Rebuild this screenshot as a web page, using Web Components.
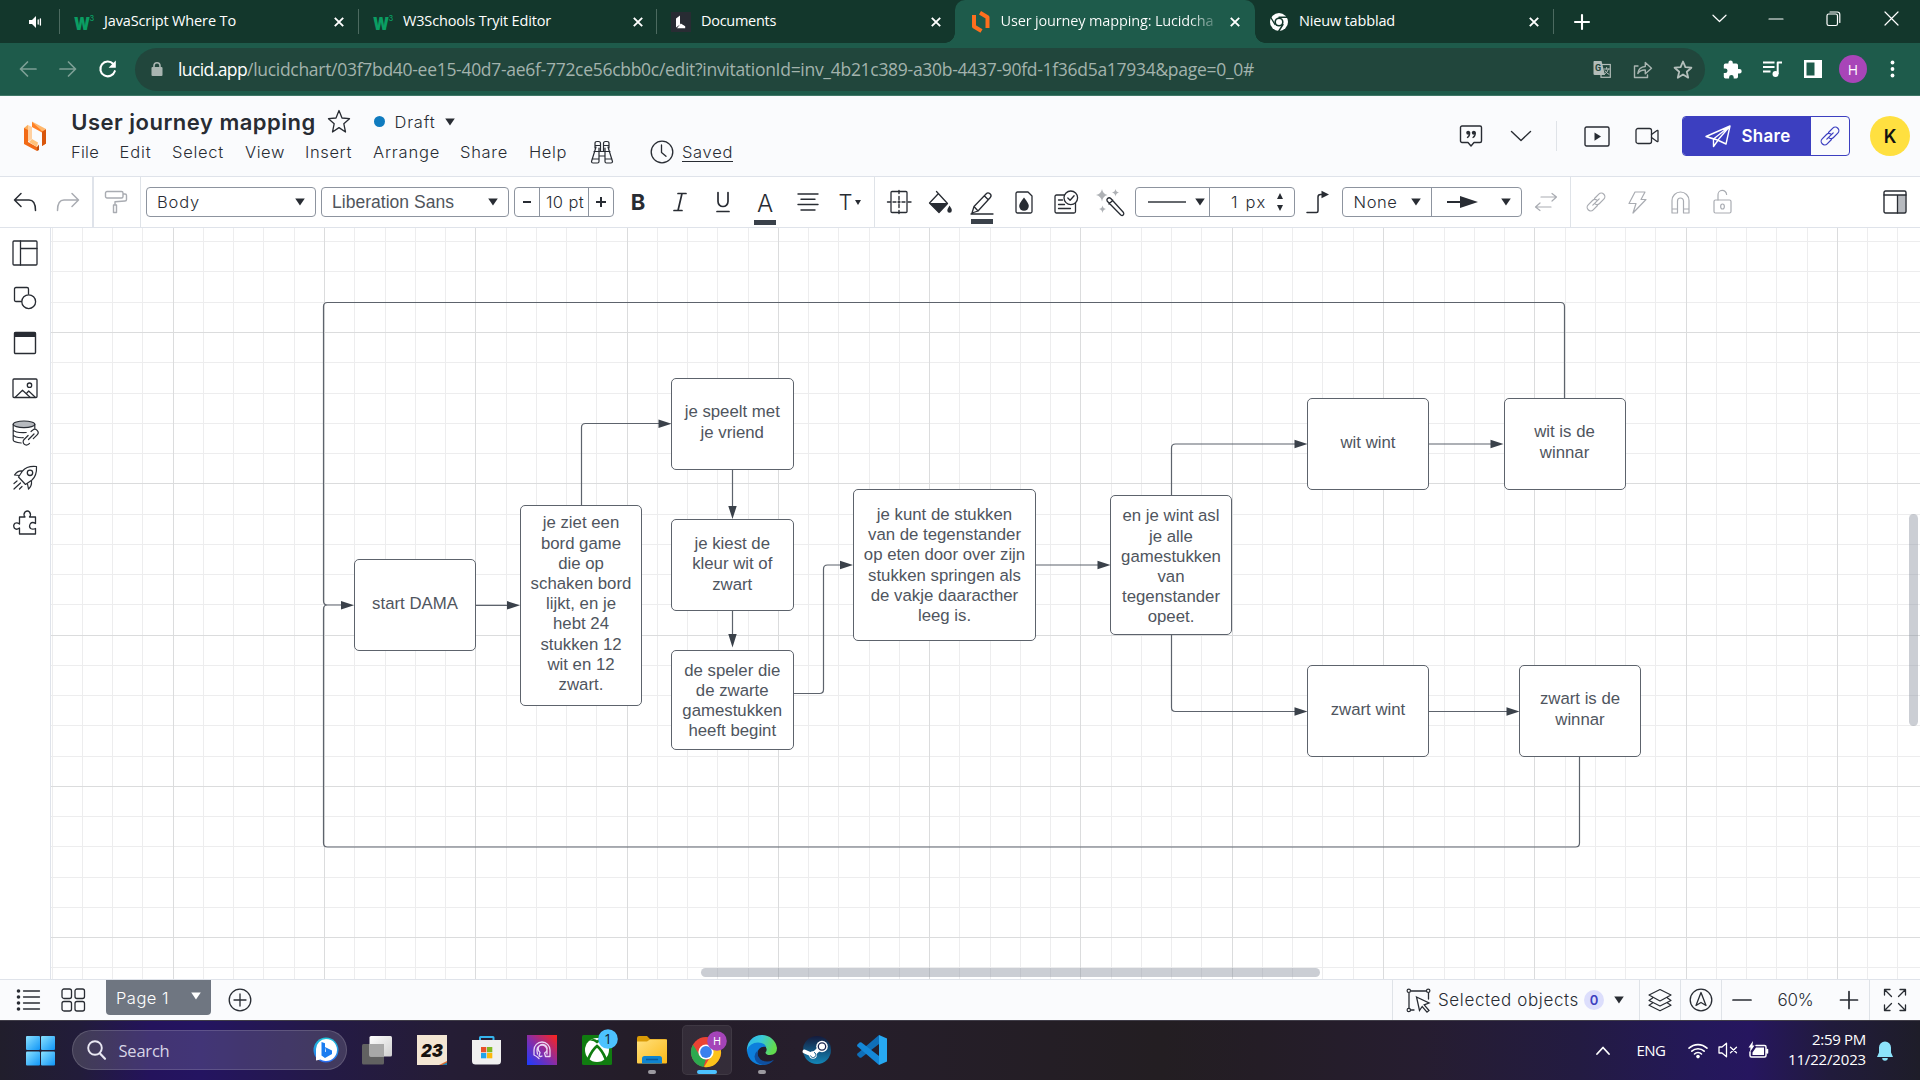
<!DOCTYPE html>
<html lang="nl">
<head>
<meta charset="utf-8">
<title>User journey mapping: Lucidchart</title>
<style>
html,body{margin:0;height:100%;overflow:hidden;background:#fff}
body{font-family:Inter,"Liberation Sans",sans-serif;color:#282c33}
</style>
</head>
<body>
<lucid-window></lucid-window>
<script>
/* ---------- icons: [width, height, svg body] ---------- */
const S = (d, w = 1.4, c = 'currentColor', extra = '') => `<path d="${d}" fill="none" stroke="${c}" stroke-width="${w}" stroke-linejoin="round" stroke-linecap="round" ${extra}/>`;
const F = (d, c = 'currentColor') => `<path d="${d}" fill="${c}"/>`;
const BUTT = 'style="stroke-linecap:butt"';
const LINK = 'M9.5 7.5l4.3-4.300a3.500 3.500 0 0 1 5 5l-4.300 4.300a3.500 3.500 0 0 1-4.300.5M12.500 14.500l-4.300 4.300a3.500 3.500 0 0 1-5-5l4.300-4.300a3.500 3.500 0 0 1 4.300-.5M7.800 14.200l6.400-6.400';
const ICONS = {
  speaker: [14, 14, F('M1 5v4h3l4 4V1L4 5z') + S('M10.2 5v4M12.4 4v6', 1.3)],
  w3: [22, 20, '<text x="0" y="17.500" font-family="Inter" font-weight="900" font-size="17" textLength="16" lengthAdjust="spacingAndGlyphs" fill="#0a9e63">W</text><text x="15.500" y="8.500" font-family="Inter" font-weight="500" font-size="7.500" fill="#0a9e63">3</text>'],
  x: [12, 12, S('M1.8 1.8l8.4 8.4M10.2 1.8L1.8 10.2', 1.9, 'currentColor', BUTT)],
  docL: [20, 20, '<rect width="20" height="20" fill="#282c33"/>' + F('M5 6.500L9 3.500v9l-4 3zM9.800 11.500l4.400 2.800v2H6z', '#fff')],
  lucid: [20, 24, S('M3 5v11.500l7.500 4.500', 4, '#ff6f1e', BUTT) + S('M9 2.800l7.500 4.400V18', 4, '#ff6f1e', BUTT)],
  lucidBig: [26, 34, F('M2 9l4-3.200V20l-4 3z', '#fcae5c') + F('M6 6l4 2v12L6 22.400z', '#ffd0a0') + F('M2 9l4 2v12l9 5v4L2 25z', '#f26a16') + F('M15 28l-8-5 3-3 6 3.500z', '#ffc27b') + F('M15 28v4l2-1v-5.500z', '#c2500e') + F('M10 2.500l14 7.500-4 2.200L10 6z', '#ffb76b') + F('M10 3v5l10 5.500V27l4-2.500V10.300L20 12z', '#ff8026') + F('M20 13v14l4-2.500V10.300z', '#d8560d')],
  chrome: [20, 20, '<circle cx="10" cy="10" r="9" fill="#fff"/><circle cx="10" cy="10" r="4.600" fill="#13372c"/><circle cx="10" cy="10" r="3" fill="#fff"/>' + S('M10 5.300h8.500M6 12.500L1.800 5.500M14 12.500L9.500 19.500', 1.4, '#13372c')],
  plusW: [16, 16, S('M8 1v14M1 8h14', 2.1)],
  chevS: [15, 9, S('M1 1.200l6.500 6.300L14 1.200', 1.2)],
  min: [14, 2, S('M0 1h14', 1.2)],
  restore: [15, 16, '<rect x="1" y="3" width="10.500" height="11.500" rx="1.800" fill="none" stroke="currentColor" stroke-width="1.200"/>' + S('M4 1h7.200q2.600 0 2.600 2.600V11.500', 1.2)],
  close: [15, 15, S('M1 1l13 13M14 1L1 14', 1.2)],
  back: [18, 16, S('M17 8H1.500M8.500 1L1.500 8l7 7', 1.7)],
  fwd: [18, 16, S('M1 8h15.500M9.500 1l7 7-7 7', 1.7)],
  reload: [20, 20, S('M16.800 12.200A7.400 7.400 0 1 1 15.300 5', 2.1) + F('M17.800 1.500v7.200h-7.200z')],
  lock: [12, 14, '<rect x="0.500" y="5" width="11" height="9" rx="1" fill="currentColor"/>' + S('M3 5.500V3.800a3 3 0 0 1 6 0V5.500', 1.6)],
  translate: [18, 19, '<path d="M1 1h7.500l3.500 14H1.800A1.300 1.300 0 0 1 .5 13.700V1.800z" fill="#b3bdb9"/><rect x="8" y="4.500" width="9.300" height="12.800" fill="none" stroke="#b3bdb9" stroke-width="1.200"/><text x="2" y="11" font-family="Roboto" font-weight="700" font-size="9" fill="#22463c">G</text>' + S('M11 9h5.500M13.600 7.500V9M15.500 9q-.8 3.500-4 5.200M12 10.800q1.500 2.500 4 3.600', 1, '#b3bdb9')],
  share: [20, 19, S('M5 6H1.500v11.500h13V15', 1.4) + S('M4.800 13.500q.8-6.500 7.500-7V2.500l6.200 5.700-6.200 5.600V10q-5-.3-7.500 3.500z', 1.4)],
  star: [20, 19, S('M10 1.500l2.400 5.700 6 .5-4.600 4 1.400 6L10 14.500l-5.200 3.200 1.400-6-4.600-4 6-.5z', 1.8)],
  bigstar: [24, 25, S('M12 1.500l3 7.500 7.500.7-5.700 5 1.700 8.300-6.500-4.400-6.500 4.400 1.700-8.300-5.700-5 7.500-.7z', 1.3)],
  puzzle: [19, 19, F('M16.500 9H15V5.200A1.700 1.700 0 0 0 13.300 3.500H9.800V2.800a2.200 2.200 0 0 0-4.400 0v.7H2.500A1.700 1.700 0 0 0 .8 5.200v3.300h1.400a2.300 2.300 0 0 1 0 4.600H.8v3.700a1.700 1.700 0 0 0 1.700 1.700h3.600v-1.300a2.300 2.300 0 0 1 4.600 0v1.300h2.600a1.700 1.700 0 0 0 1.700-1.700V13.400h1.500a2.200 2.200 0 0 0 0-4.400z')],
  queue: [21, 17, S('M1 1.500h11.500M1 6h11.500M1 10.500h7.500', 2, 'currentColor', BUTT) + S('M15.700 13V1.500H20', 2, 'currentColor', BUTT) + '<circle cx="13.500" cy="13" r="3" fill="currentColor"/>'],
  panelW: [18, 18, F('M0 0h18v18H0zM2.500 2.500v13h8v-13z').replace('/>', ' fill-rule="evenodd"/>')],
  dots: [5, 18, '<circle cx="2.500" cy="2.500" r="1.900" fill="currentColor"/><circle cx="2.500" cy="9" r="1.900" fill="currentColor"/><circle cx="2.500" cy="15.500" r="1.900" fill="currentColor"/>'],
  tri: [10, 8, F('M.2 .5h9.600L5 7.500z')],
  triS: [6, 5, F('M0 0h6L3 5z')],
  binoc: [24, 24, S('M6 7L1.500 21.500q0 1.500 1.500 1.500h4.500q1.500 0 1.500-1.500V8M18 7l4.500 14.500q0 1.500-1.500 1.500h-4.500q-1.500 0-1.500-1.500V8M4 11.500h16M9 16h6M2 19h7M15 19h7M5 8V3.500q0-2 2-2h1.500q2 0 2 2V11M19 8V3.500q0-2-2-2h-1.500q-2 0-2 2V11M5 5.500h5.500M13.500 5.500H19', 1.2)],
  clock: [24, 24, '<circle cx="12" cy="12" r="10.800" fill="none" stroke="currentColor" stroke-width="1.300"/>' + S('M11.500 5v7.500l4.500 3.800', 1.3)],
  chat: [24, 22, S('M3 1h18a1.500 1.500 0 0 1 1.500 1.500v13.500a1.500 1.500 0 0 1-1.500 1.500h-6L12 21l-3-3.500H3a1.500 1.500 0 0 1-1.500-1.500V2.500A1.500 1.500 0 0 1 3 1z', 1.4) + '<circle cx="9.200" cy="7.800" r="2" fill="currentColor"/><circle cx="14.800" cy="7.800" r="2" fill="currentColor"/>' + S('M10.600 8q.2 3-2.200 4.500M16.200 8q.2 3-2.200 4.500', 1.3)],
  chevB: [22, 12, S('M1.500 1.500l9.500 9 9.500-9', 1.4)],
  play: [26, 21, '<rect x="1" y="1" width="24" height="19" rx="1.500" fill="none" stroke="currentColor" stroke-width="1.400"/>' + F('M10.500 6.500l6.500 4-6.500 4.300z')],
  video: [24, 18, '<rect x="1" y="1.500" width="15.500" height="15" rx="2" fill="none" stroke="currentColor" stroke-width="1.300"/>' + S('M16.500 7.500L22 3.500q1-.5 1 .5v10q0 1-1 .5l-5.500-4', 1.3)],
  plane: [26, 23, S('M1 11.500L25 1l-4 18-8.500-4zM25 1L8.500 14v7.500l4-5.500M8.500 14L1 11.500M25 1L12.500 15.500', 1.4)],
  link: [22, 22, S(LINK, 1.2)],
  undo: [24, 20, S('M8 1.500L1.500 8 8 14.500M1.500 8H16q6.500 0 6.500 10.500', 1.5)],
  redo: [24, 20, S('M16 1.500L22.500 8 16 14.500M22.500 8H8Q1.500 8 1.500 18.500', 1.5)],
  roller: [24, 24, S('M3 1.500h14.500a1.500 1.500 0 0 1 1.500 1.500v3.500a1.500 1.500 0 0 1-1.500 1.500H3a1.500 1.500 0 0 1-1.500-1.500V3A1.500 1.500 0 0 1 3 1.500zM19 4h2q1.500 0 1.500 1.500v4q0 1.500-1.500 1.500l-10 .8v3M9.500 15h3v7.500h-3z', 1.4)],
  italic: [14, 20, S('M5 1.500h8M1 18.500h8M9 1.500L5 18.500', 1.7)],
  under: [16, 22, S('M3 1.500v9a5 5 0 0 0 10 0v-9M2 20.500h12', 1.7)],
  align: [20, 18, S('M0 1h20M3 6.200h14M0 11.500h20M3 17h14', 1.4)],
  crop: [24, 24, S('M4 4.500v-2q0-1 1-1h14q1 0 1 1v19q0 1-1 1H5q-1 0-1-1z', 1.3) + S('M12 .5v3M12 6.500v3M12 20.500v3M12 14.500v3M.5 12h3M6 12h3M21 12h3M15 12h3M11 12h2M12 11v2', 1.4)],
  bucket: [24, 24, S('M8.500 1.500l11 12-8.500 9L1.500 13l8.500-9', 1.3) + F('M1.500 13h18l-8.500 9.500zM21.500 15.500q2.500 3.500 2.300 5a2.200 2.200 0 0 1-4.500 0q0-1.500 2.200-5z')],
  pencil: [24, 24, S('M2 22l2-6.500L16.500 2.500q1.500-1.500 3.500.300t.300 3.700L8 20zM14.500 5l3.800 3.800M4 15.500L8 20M1 23h22', 1.3)],
  drop: [18, 23, S('M2.500 1H13l4 4v15.500a1.500 1.500 0 0 1-1.500 1.500h-13A1.500 1.500 0 0 1 1 20.500v-18A1.500 1.500 0 0 1 2.500 1z', 1.3) + F('M9 6.500q4.800 6 4.800 8.500a4.800 4.800 0 0 1-9.600 0q0-2.500 4.800-8.500z')],
  note: [25, 24, '<rect x="1" y="5" width="20.500" height="18" rx="1.500" fill="none" stroke="currentColor" stroke-width="1.300"/><circle cx="16.800" cy="7.800" r="6.800" fill="#fff" stroke="currentColor" stroke-width="1.300"/>' + S('M13.800 8l2.300 2.300 4-4.500M4.500 10h4M4.500 14.500h6M4.500 18.500h12', 1.3)],
  wand: [29, 27, F('M6 0q.8 5 5.500 6Q6.800 7 6 12.500 5.200 7 0 6q5.200-1 6-6zM19.500 0q.5 3 3.500 3.500-3 .5-3.500 4-.5-3.500-3.500-4 3-.5 3.500-3.500zM6.500 16.500q.5 3 3.500 3.500-3 .5-3.500 4-.5-3.500-3.500-4 3-.5 3.500-3.500z', '#aeb1b5') + S('M11.500 9.500q1.700-1.500 3.300 0L27.500 23.500q.8 1.500-.3 2.500-1 1-2.400 0L11.300 12.300q-1-1.500.200-2.800zM13 15l3.800-3.700', 1.3)],
  elbow: [24, 24, S('M1 22.500h9.500q1.500 0 1.500-1.500V7q0-2.500 2.500-2.500H17', 1.5) + F('M15.500 .8l7.500 3.700-7.500 3.700z')],
  swap: [24, 20, S('M7 5h15M18 1.500l4.500 3.500-4.500 4M17 15H2M6 11l-4.500 4 4.500 3.500', 1.2)],
  bolt: [19, 23, S('M7 1h10l-4 7.500h5L5 22l3-9.500H1z', 1.2)],
  magnet: [19, 23, S('M1 22V9.500a8.500 8.500 0 0 1 17 0V22h-5.500V10a3 3 0 0 0-6 0v12zM1 18h5.500M12.500 18H18', 1.2)],
  unlock: [19, 24, '<rect x="1" y="10" width="17" height="13" rx="1.500" fill="none" stroke="currentColor" stroke-width="1.200"/>' + S('M5 10V5a4.300 4.300 0 0 1 8.600-.5M9.500 14a1.700 2.300 0 0 1 0 5 1.700 2.300 0 0 1 0-5z', 1.2)],
  panel: [24, 24, '<rect x="14.500" y="5" width="8" height="17.500" fill="#b7babf"/><rect x="1" y="1" width="22" height="22" rx="1.500" fill="none" stroke="currentColor" stroke-width="1.400"/>' + S('M1 5h22M14.500 5v18', 1.3)],
  layout: [26, 26, '<rect x="1" y="1" width="24" height="24" rx="1" fill="none" stroke="currentColor" stroke-width="1.300"/>' + S('M8.500 1v24M8.500 8.500H25', 1.3)],
  shapes: [24, 24, S('M8.500 15.500H3q-1.500 0-1.500-1.500V3q0-1.500 1.500-1.500h11q1.500 0 1.500 1.500v5', 1.3) + '<circle cx="15.700" cy="15.700" r="6.900" fill="none" stroke="currentColor" stroke-width="1.300"/>'],
  frame: [24, 24, '<rect x="1.500" y="1.500" width="21" height="21" rx="1" fill="none" stroke="currentColor" stroke-width="1.400"/>' + F('M1.500 1h21v5h-21z')],
  image: [26, 20, '<rect x="1" y="1" width="24" height="18.500" rx="1" fill="none" stroke="currentColor" stroke-width="1.300"/><circle cx="17.500" cy="7.200" r="2.200" fill="none" stroke="currentColor" stroke-width="1.300"/>' + S('M3.500 19l7-6.800 7.300 6.800M14.500 15.500l2.200-2.500 6.300 6', 1.2)],
  db: [27, 26, '<ellipse cx="12" cy="4.300" rx="10.800" ry="3.300" fill="#b7babf" stroke="currentColor" stroke-width="1.200"/>' + S('M1.200 4.300V20q0 2 8 3M22.800 4.300V8M1.200 10q2 3 13 2.500M1.200 15q2 3 10 2.700M19 11.500l1.500-1.200a3.200 3.200 0 0 1 4.600 4.600l-3.800 3.800M17.500 23.300l-.8.8a3.200 3.200 0 0 1-4.600-4.600l4-4M16.500 19.500l5.500-5.500', 1.2)],
  rocket: [25, 25, S('M23.500 1.500Q14 .5 9.500 6L5.500 12l7 7.500 6.500-4.500q5-4.500 4.500-13.500zM9.500 6q-5-.5-8 4l5 .5M18.500 16q.5 5-3 8l-1-5M1 18.500l3-2.500M1 24l6.500-6M6.500 24L9 21.500', 1.2) + '<circle cx="17" cy="7.800" r="2.700" fill="none" stroke="currentColor" stroke-width="1.300"/>'],
  jigsaw: [24, 25, S('M6.500 7H12q-2-2.300 0-5 2.500-2 4.500 0 2 2.700 0 5h6v6.500q-3-2-5 0-2 3.200.2 5 2 1.200 4.800 0V24h-16v-6q-3 2.300-5 .3-1.800-3 .5-5 2-1.300 4.500.7z', 1.3)],
  list: [24, 24, '<g fill="currentColor"><circle cx="2.500" cy="3" r="1.800"/><circle cx="2.500" cy="9" r="1.800"/><circle cx="2.500" cy="15" r="1.800"/><circle cx="2.500" cy="21" r="1.800"/></g>' + S('M7.500 3h16M7.500 9h16M7.500 15h16M7.500 21h16', 1.3)],
  grid4: [25, 24, '<g fill="none" stroke="currentColor" stroke-width="1.300"><rect x="1" y="1" width="9.500" height="9.500" rx="2"/><rect x="14" y="1" width="9.500" height="9.500" rx="2"/><rect x="1" y="13.500" width="9.500" height="9.500" rx="2"/><rect x="14" y="13.500" width="9.500" height="9.500" rx="2"/></g>'],
  addc: [24, 24, '<circle cx="12" cy="12" r="10.800" fill="none" stroke="currentColor" stroke-width="1.300"/>' + S('M12 6v12M6 12h12', 1.3)],
  select: [25, 25, S('M3 5v15M5 3h15.500M22.500 5v6M3 22h5', 1.3) + '<g fill="#fff" stroke="currentColor" stroke-width="1.200"><circle cx="2.800" cy="2.800" r="1.700"/><circle cx="22.200" cy="2.800" r="1.700"/><circle cx="2.800" cy="22" r="1.700"/></g><path d="M10.500 9l12.500 6-4.800 1.800 4.800 5.700-2 1.700-4.800-5.700-2.700 4z" fill="#fff" stroke="currentColor" stroke-width="1.300"/>'],
  layers: [24, 24, S('M12 1.500l11 5.500-11 6-11-6zM4.500 10L1 12.500l11 5.500 11-5.500L19.500 10M4.500 15L1 17.300l11 5.500 11-5.500-3.500-2.300', 1.2)],
  compass: [24, 24, '<circle cx="12" cy="12" r="10.800" fill="none" stroke="currentColor" stroke-width="1.300"/>' + S('M12 4.500l5 13-5-3-5 3z', 1.3)],
  minus: [18, 2, S('M0 1h18', 1.7)],
  dash: [8, 2, S('M0 1h8', 2, 'currentColor', BUTT)],
  plusS: [10, 10, S('M5 0v10M0 5h10', 2, 'currentColor', BUTT)],
  spin: [8, 18, F('M1 6l3-6 3 6zM1 12h6l-3 6z')],
  plus: [18, 18, S('M9 .5v17M.5 9h17', 1.7)],
  expand: [24, 24, S('M1.500 7V1.500H7M1.500 1.500l7 7M17 1.500h5.500V7M22.500 1.500l-7 7M1.500 17v5.500H7M1.500 22.500l7-7M17 22.500h5.500V17M22.500 22.500l-7-7', 1.3)],
  win: [30, 30, '<defs><linearGradient id="wg" x2="1" y2="1"><stop stop-color="#8be1ff"/><stop offset="1" stop-color="#0f95f7"/></linearGradient></defs><g fill="url(#wg)"><rect width="14" height="14" rx="1"/><rect x="15" width="14" height="14" rx="1"/><rect y="15.500" width="14" height="14" rx="1"/><rect x="15" y="15.500" width="14" height="14" rx="1"/></g>'],
  mag: [19, 20, '<circle cx="8" cy="8" r="6.800" fill="none" stroke="#e9e7f2" stroke-width="1.900"/>' + S('M13 13.500l5 5.300', 2.2, '#e9e7f2')],
  bing: [26, 26, '<defs><linearGradient id="bg" x2="0" y2="1"><stop stop-color="#1fc5d8"/><stop offset="1" stop-color="#2a6af0"/></linearGradient></defs><circle cx="13" cy="13" r="12.500" fill="url(#bg)"/><path d="M13 2a11 11 0 1 1-5.500 20.500L3 23.500V12A10.500 10.500 0 0 1 13 2z" fill="#fff"/>' + F('M8.500 5l3.500 1.200v8.800l1-.5-1-4.500 7 3.500v3.500L12 21l-3.500-2.500z', '#1a7cf0')],
  task: [30, 29, '<defs><linearGradient id="tg" x2="1" y2="1"><stop stop-color="#fff"/><stop offset="1" stop-color="#cfcfcf"/></linearGradient></defs><rect x="0" y="8" width="22" height="20.500" rx="1.500" fill="#616161"/><rect x="7.500" width="22.500" height="20.500" rx="1.500" fill="url(#tg)"/><rect x="7.500" y="8" width="14.500" height="12.500" fill="#a8a8a8"/>'],
  n23: [30, 30, '<rect width="30" height="30" fill="#f3e6d3"/><path d="M22 30l8-4v4z" fill="#e06a2c"/><path d="M25 30l5-2.500v2.500z" fill="#1a7fae"/><text x="4" y="21.500" font-family="Inter" font-style="italic" font-weight="900" font-size="18" textLength="22" lengthAdjust="spacingAndGlyphs" fill="#15120f">23</text>'],
  store: [30, 30, '<path d="M8 6V2.500Q8 2 8.500 2h12.500Q21.500 2 21.500 2.500V6" fill="none" stroke="#35b4ec" stroke-width="2"/><path d="M0 5h29v21q0 3.500-3.500 3.500h-22Q0 29.500 0 26z" fill="#f0f0f0"/><rect x="9" y="12" width="5.300" height="5.300" fill="#e8512a"/><rect x="15" y="12" width="5.300" height="5.300" fill="#80b824"/><rect x="9" y="18" width="5.300" height="5.300" fill="#1fa3ea"/><rect x="15" y="18" width="5.300" height="5.300" fill="#fbb80c"/>'],
  prime: [30, 30, '<defs><linearGradient id="pg" x1="0" y1="1" x2="1" y2="0"><stop stop-color="#1a3cff"/><stop offset=".5" stop-color="#8b2ca4"/><stop offset="1" stop-color="#ff2418"/></linearGradient></defs><rect width="30" height="30" fill="url(#pg)"/>' + S('M12 23.500q-2.500-2.500-5-3.500V15a8 8 0 0 1 16 0v6.500h-4.500l-1-3.500a4.500 4.500 0 1 0-4.500-.5l-1 3.500q1.500 1 3 0M10.500 19q-.5-2.500-.5-4a5 5 0 0 1 10 0v4', 1.3, '#e9d5f5')],
  xbox: [40, 40, '<rect x="2" y="7" width="30" height="30" rx="1.500" fill="#107c10"/><circle cx="17" cy="22" r="12" fill="#fff"/>' + S('M17 18q-5 4-8.500 12.500M17 18q5 4 8.500 12.500', 2.800, '#107c10') + F('M9.500 12.500q4-.5 7.500 3 3.500-3.500 7.500-3-3.500-3-7.500-.3-4-2.700-7.500.3z', '#107c10') + '<circle cx="28" cy="11" r="9.800" fill="#4cc2ff"/><text x="28" y="16" text-anchor="middle" font-family="Open Sans" font-size="14" fill="#10202c">1</text>'],
  folder: [30, 28, F('M0 2q0-2 2-2h8l3 3h15q2 0 2 2v5H0z', '#d99a06') + '<defs><linearGradient id="fg" x2="1" y2="1"><stop stop-color="#ffe07d"/><stop offset="1" stop-color="#fbb917"/></linearGradient></defs><path d="M0 5.500h10l3-2H30V26.500q0 1-1 1H1q-1 0-1-1z" fill="url(#fg)"/><path d="M5 27.500v-5q0-2.500 2.500-2.500h15Q25 20 25 22.500v5z" fill="#0f84d0"/><path d="M9 23.500h12" stroke="#0a5a9c" stroke-width="1.500"/>'],
  chromeC: [40, 40, '<g transform="translate(4,5)"><circle cx="15" cy="17" r="15" fill="#eb4334"/><path d="M2 9.500L9 21l6 3-2.500 8A15 15 0 0 1 2 9.500z" fill="#2da94f"/><path d="M15 10.500h13.500A15 15 0 0 1 13 32l7.500-12z" fill="#fcc31b"/><circle cx="15" cy="17" r="7.600" fill="#fff"/><circle cx="15" cy="17" r="5.900" fill="#3a80ee"/></g><circle cx="30" cy="11" r="9.800" fill="#a444b8"/><text x="30" y="15" text-anchor="middle" font-family="Open Sans" font-size="11" fill="#fff">H</text>'],
  edge: [30, 30, '<defs><linearGradient id="e1" x2="1" y2=".3"><stop stop-color="#2bb5ee"/><stop offset=".5" stop-color="#39c9d8"/><stop offset="1" stop-color="#62dc4e"/></linearGradient></defs><path d="M15 0a15 15 0 0 1 15 13q0 7-7 7-4.500 0-4.500-2.800 1.500-1 1-3.500-1.500-5-7.500-5Q4 9 0 17A15 15 0 0 1 15 0z" fill="url(#e1)"/><path d="M0 15Q3 7.500 11 7.500q6.500 0 8.300 4.500Q15 11 12 14q-3 4-.5 9.500 2.500 5 7.500 6A15 15 0 0 1 0 15z" fill="#0d7fdc"/><path d="M11 15q-2 5 2.500 9.500 6 4 13.500.2Q23 30 16 30 8 29 7.500 21.500 8 17.500 11 15z" fill="#0f4f9f"/>'],
  steam: [30, 30, '<defs><linearGradient id="sg" x2="0" y2="1"><stop stop-color="#141a3c"/><stop offset="1" stop-color="#1387b8"/></linearGradient></defs><circle cx="15" cy="15" r="14" fill="url(#sg)"/>' + S('M2.500 16.500l8 3.500M10.500 20l6-5.500', 4, '#fff') + '<circle cx="20" cy="11.500" r="5.800" fill="#fff"/><circle cx="20" cy="11.500" r="3.700" fill="none" stroke="#1b2750" stroke-width="1.300"/><circle cx="11" cy="20" r="3.800" fill="#fff"/><path d="M8.500 20.500a2.700 2.700 0 1 0 3.500-3.200" fill="none" stroke="#17608c" stroke-width="1"/>'],
  vsc: [30, 30, F('M22 0l8 3.500v23L22 30z', '#27a9f2') + F('M22 0v9L4.500 22.500q-1 .5-2 0L.5 20.500q-1-1 0-2z', '#0f6fb8') + F('M22 30v-9L4.500 7.500q-1-.5-2 0L.5 9.500q-1 1 0 2z', '#1488d8')],
  up: [14, 9, S('M1 8l6-6.500L13 8', 1.8)],
  wifi: [20, 17, S('M1 6.200a13 13 0 0 1 18 0M3.800 9.200a9 9 0 0 1 12.400 0M6.500 12a5 5 0 0 1 7 0', 1.6) + '<circle cx="10" cy="14.600" r="1.800" fill="currentColor"/>'],
  mute: [20, 16, S('M1 5v6h3l4.500 3.800V1.200L4 5zM12.500 5.200l6 5.600M18.500 5.200l-6 5.600', 1.3)],
  batt: [21, 18, S('M8 4.500h8.500a1.500 1.500 0 0 1 1.500 1.500v8.500a1.500 1.500 0 0 1-1.500 1.500H3.500A1.500 1.500 0 0 1 2 14.500V11M19.500 8.500v3.500', 1.5) + F('M8 6.500h8v7.500H4.500V11.500zM5 0L.5 6.500h2L2 11l4.500-6.500H4.500z')],
  bell: [18, 20, F('M9 .5a6 6 0 0 1 6 6v5l2 4.500H1l2-4.500v-5a6 6 0 0 1 6-6zM6.200 17h5.600a2.800 2.800 0 0 1-5.600 0z', '#8de3fb')]
};

/* Turns a list of [x, width, html, style] into flex cells separated by margins. */
function cells(list, start = 0) {
  let end = start;
  return list.map(([x, w, html, st = '']) => {
    const m = +(x - end).toFixed(2);
    end = x + w;
    return `<div class="cell" style="margin-left:${m}px;width:${w}px;${st}">${html}</div>`;
  }).join('');
}
const icon = (n, c, s = '') => `<ui-icon name="${n}" style="${c ? 'color:' + c + ';' : ''}${s}"></ui-icon>`;
const T = (text, w, style = '') => `<fit-text w="${w}" style="${style}">${text}</fit-text>`;
/* centre an icon on x */
const I = (cx, n, c, s) => { const w = ICONS[n][0]; return [cx - w / 2, w, icon(n, c), s]; };
const V = (x, h, c = '#dfe3e8', w = 1) => [x, w, `<i style="display:block;width:${w}px;height:${h}px;background:${c}"></i>`];
const ROW = `:host{display:flex;align-items:center;box-sizing:border-box;flex:none}
.cell{flex:none;display:flex;align-items:center;justify-content:center;white-space:nowrap;box-sizing:border-box}
*{box-sizing:border-box}`;

class Base extends HTMLElement {
  constructor() { super(); this.attachShadow({ mode: 'open' }); }
  connectedCallback() { this.shadowRoot.innerHTML = `<style>${this.css()}</style>${this.html()}`; }
  css() { return ''; }
  html() { return '<slot></slot>'; }
}
customElements.define('ui-icon', class extends Base {
  css() { return ':host{display:block;flex:none;line-height:0}svg{display:block;overflow:visible}'; }
  html() { const [w, h, b] = ICONS[this.getAttribute('name')]; return `<svg width="${w}" height="${h}" viewBox="0 0 ${w} ${h}">${b}</svg>`; }
});
/* Text run tracked so that it occupies the requested width. */
customElements.define('fit-text', class extends Base {
  css() { return ':host{display:inline-block;white-space:pre;flex:none}span{display:inline-block}'; }
  html() { return '<span><slot></slot></span>'; }
  connectedCallback() {
    super.connectedCallback();
    const w = +this.getAttribute('w'), s = this.shadowRoot.querySelector('span');
    if (w) s.style.letterSpacing = ((w - s.getBoundingClientRect().width) / this.textContent.length).toFixed(4) + 'px';
  }
});
customElements.define('chrome-tabs', class extends Base {
  css() {
    return ROW + `:host{height:43px;background:#13372c;color:#fff;font:14.500px "Open Sans",sans-serif}
    fit-text{margin-top:-2px}
    .tab{height:43px;background:#1e5b4b;border-radius:10px 10px 0 0;align-self:flex-start;position:relative}
    .tab:before,.tab:after{content:"";position:absolute;bottom:0;width:10px;height:10px}
    .tab:before{left:-10px;background:radial-gradient(circle at 0 0,transparent 9.500px,#1e5b4b 10px)}
    .tab:after{right:-10px;background:radial-gradient(circle at 100% 0,transparent 9.500px,#1e5b4b 10px)}
    .in{display:flex;align-items:center;height:43px;width:300px}
    .fade{background:linear-gradient(90deg,#fff 88%,rgba(255,255,255,.25) 100%);-webkit-background-clip:text;background-clip:text;color:transparent}`;
  }
  html() {
    const sep = x => V(x, 25, '#4c6a60');
    const inner = cells([[16, 20, icon('lucid')], [45, 214, '<fit-text class="fade" w="213">User journey mapping: Lucidcha</fit-text>'], I(280, 'x')]);
    return cells([I(35, 'speaker'), sep(59), [74, 22, icon('w3')], [104, 132, T('JavaScript Where To', 132)], I(338.5, 'x'), sep(358),
      [373, 22, icon('w3')], [403, 148, T('W3Schools Tryit Editor', 148)], I(637.5, 'x'), sep(656), [671, 20, icon('docL')], [701, 75, T('Documents', 75)], I(936, 'x'),
      [955, 300, `<div class="tab"><div class="in">${inner}</div></div>`],
      I(1279, 'chrome', '', 'margin-top:-1px'), [1299, 96, T('Nieuw tabblad', 96)], I(1533.5, 'x'), sep(1553), I(1581.5, 'plusW'), I(1719, 'chevS', '', 'padding-bottom:6px'), I(1776, 'min', '', 'padding-bottom:6px'), I(1833, 'restore', '', 'padding-bottom:6px'), I(1891, 'close', '', 'padding-bottom:6px')]
      .map(c => (c[0] === 1279 - 10 ? [c[0], c[1], c[2]] : c)));
  }
});
customElements.define('chrome-toolbar', class extends Base {
  css() {
    return ROW + `:host{height:53px;background:#1e5b4b;border-bottom:1px solid #3f7767;color:#fff;font:17.500px "Open Sans",sans-serif}
    .omni{display:flex;align-items:center;width:1570px;height:43px;border-radius:22px;background:#21463c}
    .ava{width:28px;height:28px;border-radius:50%;background:#a845b8;display:flex;align-items:center;justify-content:center;font-size:14px}`;
  }
  html() {
    const omni = cells([I(157, 'lock', '#a9b5b1'), [178, 69, T('lucid.app', 69)], [247, 1007, T('/lucidchart/03f7bd40-ee15-40d7-ae6f-772ce56cbb0c/edit?invitationId=inv_4b21c389-a30b-4437-90fd-1f36d5a17934&amp;page=0_0#', 1007, 'color:#a3b3ad')],
      I(1602, 'translate'), I(1642.5, 'share', '#a9b5b1'), I(1682.5, 'star', '#b4bfbb')], 135);
    return cells([I(27.5, 'back', '#7d9f95'), I(67.5, 'fwd', '#7d9f95'), I(108, 'reload'), [135, 1570, `<div class="omni">${omni}</div>`],
      I(1732.5, 'puzzle'), I(1772.5, 'queue'), I(1812.5, 'panelW'), [1839, 28, '<div class="ava">H</div>'], I(1892, 'dots')]);
  }
});
customElements.define('doc-header', class extends Base {
  css() {
    return ROW + `:host{height:81px;background:#fafbfd;border-bottom:1px solid #dfe3ea;align-items:stretch;font-size:16.500px;font-weight:350}
    .logo{width:70px;display:flex;align-items:center;justify-content:center;flex:none}
    .mid{display:flex;flex-direction:column;padding-top:11px}
    .r1,.r2{display:flex;align-items:center;height:29px}.r2{height:31px}
    .right{display:flex;align-items:center;margin-left:auto}
    .dot{width:11px;height:11px;border-radius:50%;background:#0f7bbf}
    .share{width:168px;height:40px;display:flex;border-radius:4px;border:1px solid #3c3fc0;background:#fafbfd;color:#3c3fc0;overflow:hidden}
    .share>.p{width:128px;background:#3c3fc0;color:#fff;display:flex;align-items:center;font-weight:600}
    .share>.q{flex:1;display:flex;align-items:center;justify-content:center}
    .k{width:40px;height:40px;border-radius:50%;background:#ffe040;color:#111;font-weight:600;font-size:18px;display:flex;align-items:center;justify-content:center}
    u{display:block;text-decoration:none;border-bottom:1.500px solid #282c33;line-height:18px;height:19px;margin-top:1px}`;
  }
  html() {
    const menu = [['File', 71, 28], ['Edit', 119.5, 32], ['Select', 172, 52], ['View', 245, 40], ['Insert', 305, 47], ['Arrange', 373, 67], ['Share', 460, 48], ['Help', 529, 38]];
    return `<div class="logo">${icon('lucidBig')}</div><div class="mid"><div class="r1">${cells([[71, 245, T('User journey mapping', 244.5, 'font-size:22px;font-weight:600')], I(339, 'bigstar'), [373.5, 11, '<div class="dot"></div>'], [394, 42, T('Draft', 41)], I(450, 'tri')], 70)}</div>
    <div class="r2">${cells([...menu.map(([t, x, w]) => [x, w, T(t, w)]), I(602, 'binoc'), I(662, 'clock'), [682, 51, `<u>${T('Saved', 51)}</u>`]], 70)}</div></div>
    <div class="right">${cells([I(1471, 'chat'), I(1521, 'chevB'), V(1556, 30), I(1597, 'play'), I(1647, 'video'),
      [1682, 168, `<div class="share"><div class="p">${cells([[22, 26, icon('plane')], [58, 50, T('Share', 49, 'font-size:17px')]])}</div><div class="q">${icon('link')}</div></div>`],
      [1870, 40, '<div class="k">K</div>']], 1459)}<div style="width:10px"></div></div>`;
  }
});
customElements.define('format-bar', class extends Base {
  css() {
    return ROW + `:host{height:51px;background:#fff;border-bottom:1px solid #dfe3ea;font-size:16.500px;font-weight:350}
    .box{display:flex;align-items:center;height:30px;border:1px solid #8d949f;border-radius:4px;width:100%}
    .col{display:flex;flex-direction:column;align-items:center}
    .bar{width:22px;height:5px;background:#3a414a;margin-top:4px}`;
  }
  html() {
    const g = '#a9acb2', box = (x, w, list) => [x, w, `<div class="box">${cells(list, x + 1)}</div>`];
    const v = x => V(x, 28, '#8d949f');
    return cells([I(25, 'undo'), I(68, 'redo', g), V(91.5, 50, '#dfe3ea', 2), I(116, 'roller', g), V(140, 50),
      box(146, 170, [[157, 43, T('Body', 43)], I(300, 'tri')]),
      box(321, 188, [[332, 122, T('Liberation Sans', 122, 'font-family:Liberation Sans;font-size:17.500px;font-weight:400;color:#50555c;margin-top:1px')], I(493, 'tri')]),
      box(514, 100, [[523, 8, icon('dash')], v(539), [546, 38, T('10 pt', 38)], v(588), [596, 10, icon('plusS')]]),
      [630, 16, '<b style="font-size:22px">B</b>'], I(680, 'italic'), I(723, 'under'),
      [754, 22, `<div class="col" style="margin-top:11px"><span style="font-size:24px;line-height:25px">A</span><div class="bar"></div></div>`],
      I(808, 'align'), [838, 15, '<span style="font-size:22px">T</span>'], [855, 6, icon('triS')], V(874, 50), I(899, 'crop'), I(940, 'bucket'),
      [970, 24, `<div class="col" style="margin-top:10px">${icon('pencil')}<div class="bar"></div></div>`],
      I(1024, 'drop'), I(1066.500, 'note'), I(1110, 'wand'),
      box(1135, 160, [[1148, 38, '<i style="display:block;width:38px;height:2px;background:#66696e"></i>'], I(1200, 'tri'), v(1209), [1231, 36, T('1 px', 36)], [1276, 8, icon('spin')]]),
      I(1318, 'elbow'), box(1342, 180, [[1353.5, 44, T('None', 44)], I(1416, 'tri'), v(1431), [1447, 31, '<svg width="31" height="14"><path d="M0 7h14" stroke="#282c33" stroke-width="2"/><path d="M13 1l18 6-18 6z" fill="#282c33"/></svg>'], I(1505.5, 'tri')]),
      I(1546, 'swap', g), V(1570, 50), I(1595.500, 'link', g), I(1637, 'bolt', g), I(1680, 'magnet', g), I(1722, 'unlock', g), I(1895, 'panel')]);
  }
});
customElements.define('side-rail', class extends Base {
  css() { return ':host{display:flex;flex-direction:column;align-items:center;width:51px;flex:none;box-sizing:border-box;border-right:1px solid #dfe3ea;background:#fff;padding-top:2px}div{height:45px;display:flex;align-items:center}'; }
  html() { return ['layout', 'shapes', 'frame', 'image', 'db', 'rocket', 'jigsaw'].map(n => `<div>${icon(n)}</div>`).join(''); }
});
customElements.define('flow-node', class extends Base {
  css() {
    return `:host{position:absolute;display:flex;align-items:center;justify-content:center;box-sizing:border-box;background:#fff;border:1.200px solid #5d636c;border-radius:5px;
    font:16.800px/20.200px "Liberation Sans",sans-serif;color:#4f555e;text-align:center;white-space:nowrap;padding-bottom:3px}`;
  }
});
customElements.define('flow-canvas', class extends Base {
  css() { return ':host{display:block;flex:1;position:relative;overflow:hidden;background:#fff}svg{position:absolute;left:-51px;top:-228px}.h,.v{position:absolute;background:rgba(140,147,160,.45);border-radius:5px}.h{left:650px;width:619px;height:9px;top:740px}.v{left:1858px;width:9px;top:286px;height:212px}'; }
  html() {
    const PX = 30.2565, PY = 30.2525; let minor = '', major = '';
    for (let k = -4; k < 59; k++) { const x = Math.floor(173.23 + k * PX) + .5, s = `M${x} 228V979`; k % 5 ? minor += s : major += s; }
    for (let k = -3; k < 22; k++) { const y = Math.floor(332.5 + k * PY) + .5, s = `M51 ${y}H1920`; k % 5 ? minor += s : major += s; }
    const lines = ['M1564.500 398V306.500q0-4-4-4H327.500q-4 0-4 4V601q0 4 4 4H343', 'M1579.500 756V843q0 4-4 4H327.500q-4 0-4-4V609q0-4 4-4', 'M475.500 605.300H510', 'M581.500 505V427.500q0-4 4-4H660', 'M732.500 469V508', 'M732.500 610V636', 'M793 693.500H819.500q4 0 4-4V569q0-4 4-4H842', 'M1035.500 565H1099', 'M1171.500 495V448q0-4 4-4H1296', 'M1171.500 634V707.500q0 4 4 4H1296', 'M1428.500 444H1492', 'M1428.500 711.500H1508'];
    const heads = [[354, 605.3], [520, 605.3], [671.5, 423.7], [853, 565], [1110.500, 565], [1307.5, 444], [1307.5, 711.5], [1503.500, 444], [1519.500, 711.5]].map(([x, y]) => `M${x} ${y}l-13-4.200v8.400z`).join('') + 'M732.500 519l-4.200-13h8.400zM732.500 647.500l-4.200-13.500h8.400z';
    /* x, y, width, height, label, label shift */
    const nodes = [
      [354, 559, 122, 92, 'start DAMA', 1],
      [520, 505, 122, 200.5, 'je ziet een<br>bord game<br>die op<br>schaken bord<br>lijkt, en je<br>hebt 24<br>stukken 12<br>wit en 12<br>zwart.', .5],
      [671, 378, 122.5, 92, 'je speelt met<br>je vriend', 0],
      [671, 519, 122.5, 92, 'je kiest de<br>kleur wit of<br>zwart', 1],
      [671, 650, 122.5, 100, 'de speler die<br>de zwarte<br>gamestukken<br>heeft begint', 2.5],
      [853, 489, 183, 152, 'je kunt de stukken<br>van de tegenstander<br>op eten door over zijn<br>stukken springen als<br>de vakje daaracther<br>leeg is.', 2],
      [1110, 495, 122, 140, 'en je wint asl<br>je alle<br>gamestukken<br>van<br>tegenstander<br>opeet.', 3.5],
      [1307, 398, 122, 92, 'wit wint', 1], [1503.5, 398, 122, 92, 'wit is de<br>winnar', 0],
      [1307, 665, 122, 92, 'zwart wint', 1], [1519, 665, 122, 92, 'zwart is de<br>winnar', 0]];
    return `<svg width="1920" height="1080"><path d="${minor}" stroke="#ededee" fill="none"/><path d="${major}" stroke="#dbdcdd" fill="none"/>
      <path d="${lines.join('')}" stroke="#5d636c" stroke-width="1.200" fill="none"/><path d="${heads}" fill="#3a414a"/></svg>` +
      nodes.map(([x, y, w, h, t, d]) => `<flow-node style="left:${x - 51}px;top:${y - 228}px;width:${w}px;height:${h}px"><div style="padding-top:${d * 2}px">${t}</div></flow-node>`).join('') +
      '<div class="h"></div><div class="v"></div>';
  }
});
customElements.define('page-footer', class extends Base {
  css() {
    return ROW + `:host{height:41px;background:#fafbfd;border-top:1px solid #dfe3ea;font-size:17px;font-weight:350}
    .pg{display:flex;align-items:center;width:105px;height:35px;background:#6f7681;color:#fff;border-radius:0 0 4px 4px;font-size:16.500px}
    .bd{width:20px;height:20px;border-radius:50%;background:#dcdefc;color:#3c3fc0;font-size:13px;font-weight:600;display:flex;align-items:center;justify-content:center}`;
  }
  html() {
    return cells([I(28, 'list'), I(73, 'grid4'), [106, 105, `<div class="pg">${cells([[10, 53, T('Page 1', 53)], I(90, 'tri', '', 'padding-bottom:3px')])}</div>`, 'align-self:flex-start'], I(240, 'addc'),
      V(1392, 40), I(1418, 'select'), [1438, 141, T('Selected objects', 141)], [1584, 20, '<div class="bd">0</div>'], I(1619, 'tri'), V(1639, 40), I(1660, 'layers'), V(1680, 40), I(1701, 'compass'), V(1721, 40),
      I(1742, 'minus'), [1777.5, 36, T('60%', 36)], I(1849, 'plus'), V(1869, 40), I(1895, 'expand')]);
  }
});
customElements.define('task-bar', class extends Base {
  css() {
    return ROW + `:host{height:60px;border-top:1px solid #403d48;color:#fff;font:15px "Open Sans",sans-serif;padding-bottom:1px;
    background:linear-gradient(90deg,#211e2c 0,#221c3a 80px,#24135c 150px,#241461 200px,#241a45 330px,#251d35 450px,#241d28 640px,#261e2c 800px,#231e22 1160px,#241d26 1260px,#261d30 1420px,#231b42 1580px,#24185a 1700px,#26165f 1750px,#211b3c 1830px,#1e1d29 1920px)}
    .s{display:flex;align-items:center;width:275px;height:40px;border-radius:20px;background:rgba(255,255,255,.14);border:1px solid rgba(255,255,255,.15)}
    .app{display:flex;flex-direction:column;align-items:center;justify-content:center;height:50px;width:50px;position:relative;border-radius:5px}
    .on{background:rgba(255,255,255,.07);border:1px solid rgba(255,255,255,.06)}
    .ind{position:absolute;bottom:1px;height:4px;border-radius:2px;background:#9c9aa0;width:8px}
    .on .ind{width:20px;background:#4cc2ff;bottom:0}
    .t{display:flex;flex-direction:column;align-items:flex-end;line-height:20px}`;
  }
  html() {
    const app = (cx, n, ind = '', on = '') => [cx - 25, 50, `<div class="app ${on}">${icon(n)}${ind ? '<i class="ind"></i>' : ''}</div>`];
    return cells([I(41, 'win', '', 'padding-top:1px'), [72, 275, `<div class="s">${cells([I(96, 'mag'), [118, 52, T('Search', 51, 'font-size:16.500px;color:#d8d5e6')], I(326, 'bing')], 73)}</div>`],
      I(377, 'task'), I(432, 'n23'), I(487, 'store'), I(542, 'prime'), I(600, 'xbox', '', 'padding-bottom:4px'), app(652, 'folder', 1), app(707, 'chromeC', 1, 'on'), app(762, 'edge', 1), app(817, 'steam'), app(872, 'vsc'),
      I(1603, 'up'), [1636.5, 29, T('ENG', 29)], I(1698, 'wifi'), I(1727.5, 'mute'), I(1758, 'batt'), [1776, 90, `<div class="t">${T('2:59 PM', 54)}${T('11/22/2023', 78)}</div>`, 'justify-content:flex-end;padding-bottom:2px'], I(1885, 'bell', '', 'padding-top:1px')]);
  }
});
customElements.define('lucid-window', class extends Base {
  css() { return ':host{display:flex;flex-direction:column;width:1920px;height:1080px;overflow:hidden}main{display:flex;flex:1;min-height:0}'; }
  html() { return '<chrome-tabs></chrome-tabs><chrome-toolbar></chrome-toolbar><doc-header></doc-header><format-bar></format-bar><main><side-rail></side-rail><flow-canvas></flow-canvas></main><page-footer></page-footer><task-bar></task-bar>'; }
});
</script>
</body>
</html>
